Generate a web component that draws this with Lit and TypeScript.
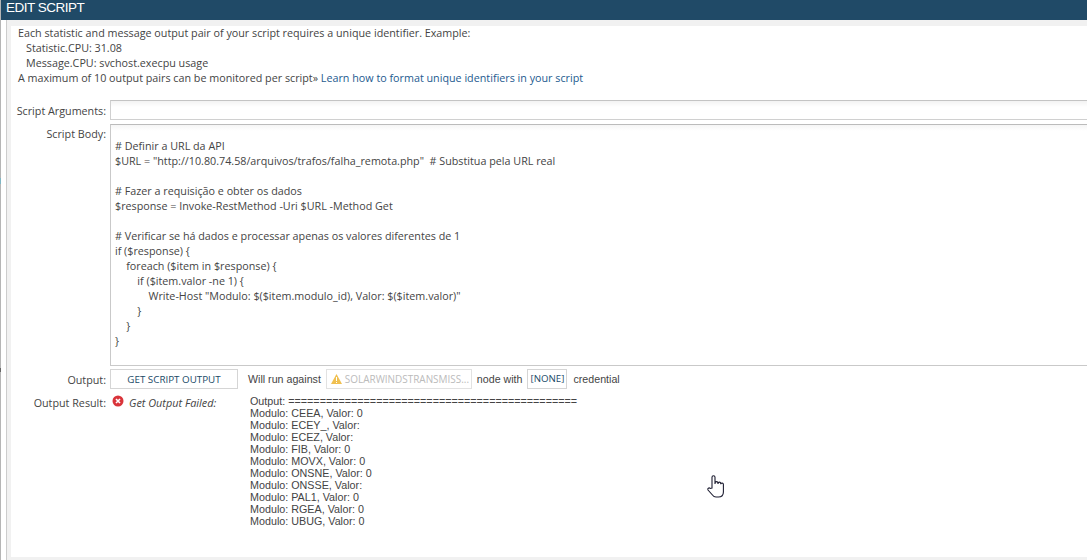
import { LitElement, html, css } from "lit";
import { customElement } from "lit/decorators.js";

const SCRIPT = [
  "# Definir a URL da API",
  '$URL = "http://10.80.74.58/arquivos/trafos/falha_remota.php"  # Substitua pela URL real',
  "",
  "# Fazer a requisição e obter os dados",
  "$response = Invoke-RestMethod -Uri $URL -Method Get",
  "",
  "# Verificar se há dados e processar apenas os valores diferentes de 1",
  "if ($response) {",
  "    foreach ($item in $response) {",
  "        if ($item.valor -ne 1) {",
  '            Write-Host "Modulo: $($item.modulo_id), Valor: $($item.valor)"',
  "        }",
  "    }",
  "}",
];
const OUTPUT = [
  "Output: ==============================================",
  "Modulo: CEEA, Valor: 0",
  "Modulo: ECEY_, Valor:",
  "Modulo: ECEZ, Valor:",
  "Modulo: FIB, Valor: 0",
  "Modulo: MOVX, Valor: 0",
  "Modulo: ONSNE, Valor: 0",
  "Modulo: ONSSE, Valor:",
  "Modulo: PAL1, Valor: 0",
  "Modulo: RGEA, Valor: 0",
  "Modulo: UBUG, Valor: 0",
];

@customElement("app-root")
export class AppRoot extends LitElement {
  static styles = css`
    :host { display: block; width: 1087px; height: 560px; overflow: hidden; background: #fff; position: relative;
      font-family: "Open Sans", "Liberation Sans", sans-serif; font-size: 10.75px; color: #444; }
    .frame { height: 560px; box-sizing: border-box; display: flex; flex-direction: column; border-left: 1px solid #b5b5b5; }
    .bar { height: 20px; flex: none; background: #204a67; color: #fff; font-family: "Liberation Sans", sans-serif; font-size: 13.5px; line-height: 16px; padding-left: 5px; letter-spacing: -0.5px; }
    .outer { flex: 1; margin-left: 5px; border-left: 1px solid #ccc; background: #f1f1f1; padding: 6px 0 3px 4px; display: flex; min-height: 0; }
    .panel { flex: 1; background: #fff; min-width: 0; display: flex; flex-direction: column; }
    .intro { height: 74px; padding-left: 7px; line-height: 15px; flex: none; white-space: nowrap; box-sizing: border-box; }
    .intro .ind { padding-left: 8px; }
    a { color: #1d5a8f; text-decoration: none; }
    .row { display: grid; grid-template-columns: 95px 1fr; column-gap: 4px; }
    .r-args { margin-bottom: 4px; }
    .r-body { margin-bottom: 3px; }
    .r-out { margin-bottom: 7px; }
    .lbl { text-align: right; white-space: nowrap; }
    .l-args { padding-top: 4px; }
    .l-body { padding-top: 3px; }
    .l-out { padding-top: 4px; }
    .args { height: 20px; border: 1px solid #d0d0d0; border-right: none; border-top-color: #c4c4c4; background: linear-gradient(#f3f3f3, #fff 6px); box-sizing: border-box; }
    .body-box { height: 242px; border: 1px solid #c9c9c9; border-right: none; border-top-color: #bbb; box-sizing: border-box; white-space: pre; padding-top: 14px; padding-left: 4px; line-height: 15px; color: #444; background: linear-gradient(#f5f5f5, #fff 6px); overflow: hidden; }
    .output { display: flex; align-items: center; white-space: nowrap; height: 20px; font-family: "Liberation Sans", sans-serif; font-size: 10.67px; }
    .btn { width: 128px; height: 20px; flex: none; box-sizing: border-box; border: 1px solid #d5d5d5; color: #204a67; text-align: center; line-height: 19px; font-family: "Open Sans", sans-serif; font-size: 9.8px; }
    .wr { margin-left: 10px; }
    .node { margin: 0 5px 0 5px; width: 146px; height: 20px; flex: none; box-sizing: border-box; border: 1px solid #e2e2e2; color: #bbb; display: flex; align-items: center; padding-left: 4px; gap: 3px; font-family: "Open Sans", sans-serif; font-size: 9.95px; overflow: hidden; }
    .with { margin-right: 5px; }
    .cred { margin-right: 6px; border: 1px solid #d5d5d5; height: 20px; width: 40px; flex: none; box-sizing: border-box; text-align: center; line-height: 18px; color: #204a67; font-family: "Open Sans", sans-serif; font-size: 9.7px; }
    .result { display: grid; grid-template-columns: 19px 121px 1fr; }
    .icon { margin: -1px 0 0 2px; }
    .fail { font-style: italic; white-space: nowrap; font-size: 10.9px; margin-top: -1px; }
    .mono { font-family: "Liberation Sans", sans-serif; font-size: 10.75px; line-height: 12px; white-space: pre; color: #444; margin-top: -1px; }
    .cursor { position: absolute; left: 706px; top: 474px; width: 20px; height: 26px; }
    .tick { position: absolute; left: 0; width: 1px; }
    .t1 { top: 178px; height: 6px; background: #7fb6c4; }
    .t2 { top: 368px; height: 4px; background: #666; }
  `;
  render() {
    return html`<div class="frame">
      <div class="bar">EDIT SCRIPT</div>
      <div class="outer"><div class="panel">
        <div class="intro">
          <div>Each statistic and message output pair of your script requires a unique identifier. Example:</div>
          <div class="ind">Statistic.CPU: 31.08</div>
          <div class="ind">Message.CPU: svchost.execpu usage</div>
          <div>A maximum of 10 output pairs can be monitored per script» <a>Learn how to format unique identifiers in your script</a></div>
        </div>
        <div class="row r-args"><div class="lbl l-args">Script Arguments:</div><div class="args"></div></div>
        <div class="row r-body"><div class="lbl l-body">Script Body:</div><div class="body-box">${SCRIPT.join("\n")}</div></div>
        <div class="row r-out"><div class="lbl l-out">Output:</div>
          <div class="output"><div class="btn">GET SCRIPT OUTPUT</div><span class="wr">Will run against</span>
            <div class="node"><svg width="11" height="10" viewBox="0 0 11 10"><path d="M5.5 0 11 10H0z" fill="#f0c050"/><rect x="5" y="3" width="1" height="4" fill="#fff"/><rect x="5" y="8" width="1" height="1" fill="#fff"/></svg>SOLARWINDSTRANSMISS...</div>
            <span class="with">node with</span><div class="cred">[NONE]</div><span>credential</span></div></div>
        <div class="row"><div class="lbl">Output Result:</div>
          <div class="result"><svg class="icon" width="12" height="12" viewBox="0 0 12 12"><circle cx="6" cy="6" r="5.5" fill="#d9343a"/><path d="M4 4l4 4M8 4l-4 4" stroke="#fff" stroke-width="1.6"/></svg>
            <div class="fail">Get Output Failed:</div>
            <div class="mono">${OUTPUT.join("\n")}</div></div></div>
      </div></div></div>
      <div class="tick t1"></div><div class="tick t2"></div>
      <svg class="cursor" viewBox="0 0 20 26"><path d="M6 14V3.200a1.500 1.500 0 0 1 3 0V10l.1-1a1.400 1.400 0 0 1 2.800 0l.1 1 .1-.6a1.300 1.300 0 0 1 2.600 0l.1.8.1-.3a1.300 1.300 0 0 1 2.500.3V18c0 3-2 5-5 5H10c-2 0-3-1-4-2.500L2 16c-.8-1.400 1-2.800 2.200-1.500z" fill="#fff" stroke="#1c1c30" stroke-width="1.100"/></svg>`;
  }
}
